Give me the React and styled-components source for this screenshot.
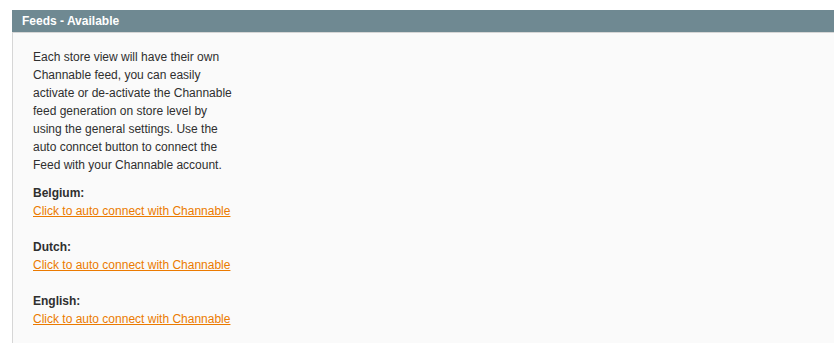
import React from 'react';
import styled, { createGlobalStyle } from 'styled-components';

const GlobalStyle = createGlobalStyle`
  html, body {
    margin: 0;
    padding: 0;
    background: #fff;
    overflow: hidden;
  }
  body {
    font-family: "Liberation Sans", Arial, sans-serif;
    font-size: 12px;
    color: #2f2f2f;
  }
`;

const stores = ['Belgium', 'Dutch', 'English'];

export default function App() {
  return (
    <>
      <GlobalStyle />
      <Page>
        <Section>
          <SectionHead>
            <SectionTitle>Feeds - Available</SectionTitle>
          </SectionHead>
          <Fieldset>
            <Intro>
              Each store view will have their own Channable feed, you can easily activate or
              de-activate the Channable feed generation on store level by using the general
              settings. Use the auto conncet button to connect the Feed with your Channable
              account.
            </Intro>
            {stores.map((store) => (
              <StoreRow key={store}>
                <StoreLabel>{store}:</StoreLabel>
                <ConnectLink href="#">Click to auto connect with Channable</ConnectLink>
              </StoreRow>
            ))}
          </Fieldset>
        </Section>
      </Page>
    </>
  );
}

// the panel runs on past the right and bottom edge of the view
const Page = styled.div`
  box-sizing: border-box;
  height: 100vh;
  overflow: hidden;
  padding: 10px 0 0 12px;
`;

const Section = styled.div`
  width: calc(100% + 20px);
`;

const SectionHead = styled.div`
  background: #6f8992;
  padding: 2px 10px;
`;

const SectionTitle = styled.h4`
  margin: 0;
  font-size: 12px;
  line-height: 18px;
  font-weight: bold;
  color: #fff;
`;

const Fieldset = styled.div`
  background: #fafafa;
  border: 1px solid #d6d6d6;
  padding: 15px 20px 0;
  min-height: 320px;
`;

const Intro = styled.p`
  margin: 0 0 10px;
  width: 200px;
  line-height: 18px;
`;

const StoreRow = styled.div`
  display: flex;
  flex-direction: column;
  align-items: flex-start;
  margin-bottom: 18px;
  line-height: 18px;
`;

const StoreLabel = styled.strong`
  font-weight: bold;
`;

const ConnectLink = styled.a`
  color: #eb7a00;
  text-decoration: underline;
`;
